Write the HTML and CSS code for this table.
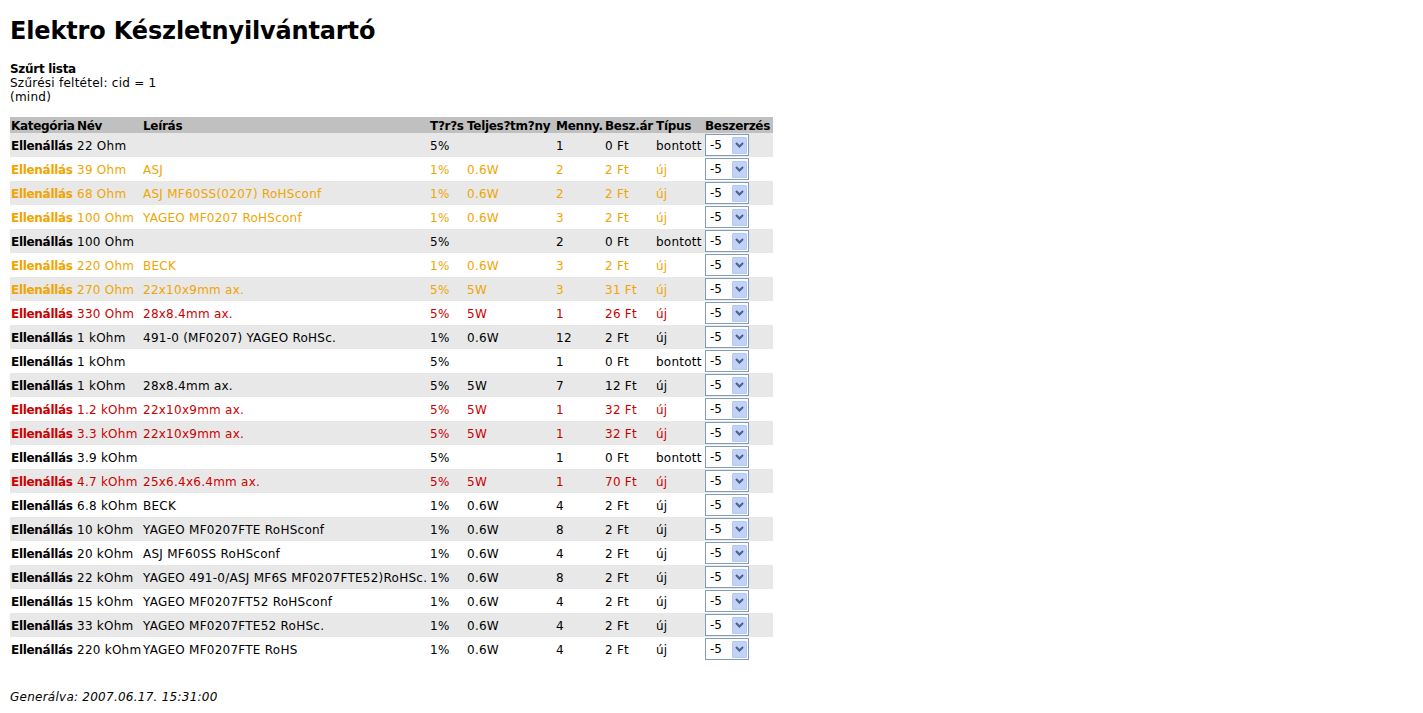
FILE: index.html
```html
<!DOCTYPE html>
<html lang="hu">
<head>
<meta charset="utf-8">
<title>Elektro Készletnyilvántartó</title>
<link rel="stylesheet" href="styles.css">
</head>
<body>
<h1 class="title">Elektro Készletnyilvántartó</h1>
<div class="info">
  <b>Szűrt lista</b><br>
  Szűrési feltétel: cid = 1<br>
  (mind)
</div>
<table class="list">
  <colgroup>
    <col class="c-cat"><col class="c-name"><col class="c-desc"><col class="c-tol"><col class="c-pow"><col class="c-qty"><col class="c-price"><col class="c-type"><col class="c-buy">
  </colgroup>
  <thead>
    <tr><th>Kategória</th><th>Név</th><th>Leírás</th><th>T?r?s</th><th>Teljes?tm?ny</th><th>Menny.</th><th>Besz.ár</th><th>Típus</th><th>Beszerzés</th></tr>
  </thead>
  <tbody id="rows"></tbody>
</table>
<p class="gen">Generálva: 2007.06.17. 15:31:00</p>
<script src="app.js"></script>
</body>
</html>
```
FILE: app.js
```js
var data = [
  ["k","22 Ohm","","5%","","1","0 Ft","bontott"],
  ["o","39 Ohm","ASJ","1%","0.6W","2","2 Ft","új"],
  ["o","68 Ohm","ASJ MF60SS(0207) RoHSconf","1%","0.6W","2","2 Ft","új"],
  ["o","100 Ohm","YAGEO MF0207 RoHSconf","1%","0.6W","3","2 Ft","új"],
  ["k","100 Ohm","","5%","","2","0 Ft","bontott"],
  ["o","220 Ohm","BECK","1%","0.6W","3","2 Ft","új"],
  ["o","270 Ohm","22x10x9mm ax.","5%","5W","3","31 Ft","új"],
  ["r","330 Ohm","28x8.4mm ax.","5%","5W","1","26 Ft","új"],
  ["k","1 kOhm","491-0 (MF0207) YAGEO RoHSc.","1%","0.6W","12","2 Ft","új"],
  ["k","1 kOhm","","5%","","1","0 Ft","bontott"],
  ["k","1 kOhm","28x8.4mm ax.","5%","5W","7","12 Ft","új"],
  ["r","1.2 kOhm","22x10x9mm ax.","5%","5W","1","32 Ft","új"],
  ["r","3.3 kOhm","22x10x9mm ax.","5%","5W","1","32 Ft","új"],
  ["k","3.9 kOhm","","5%","","1","0 Ft","bontott"],
  ["r","4.7 kOhm","25x6.4x6.4mm ax.","5%","5W","1","70 Ft","új"],
  ["k","6.8 kOhm","BECK","1%","0.6W","4","2 Ft","új"],
  ["k","10 kOhm","YAGEO MF0207FTE RoHSconf","1%","0.6W","8","2 Ft","új"],
  ["k","20 kOhm","ASJ MF60SS RoHSconf","1%","0.6W","4","2 Ft","új"],
  ["k","22 kOhm","YAGEO 491-0/ASJ MF6S MF0207FTE52)RoHSc.","1%","0.6W","8","2 Ft","új"],
  ["k","15 kOhm","YAGEO MF0207FT52 RoHSconf","1%","0.6W","4","2 Ft","új"],
  ["k","33 kOhm","YAGEO MF0207FTE52 RoHSc.","1%","0.6W","4","2 Ft","új"],
  ["k","220 kOhm","YAGEO MF0207FTE RoHS","1%","0.6W","4","2 Ft","új"]
];
var tb = document.getElementById("rows");
var chev = '<svg width="9" height="6" viewBox="0 0 9 6"><path d="M1 1 L4.5 4.5 L8 1" fill="none" stroke="#4d6185" stroke-width="2"/></svg>';
data.forEach(function (r, i) {
  var tr = document.createElement("tr");
  tr.className = (i % 2 === 0 ? "alt " : "") + "t-" + r[0];
  var html = '<td><b>Ellenállás</b></td>';
  for (var j = 1; j < 8; j++) html += '<td>' + r[j] + '</td>';
  html += '<td><span class="sel"><span class="sel-val">-5</span><span class="sel-btn">' + chev + '</span></span></td>';
  tr.innerHTML = html;
  tb.appendChild(tr);
});
```
FILE: styles.css
```css
body {
  margin: 10px;
  font-family: "DejaVu Sans", Verdana, sans-serif;
  font-size: 12px;
  line-height: 14px;
  letter-spacing: 0.25px;
  color: #000;
  background: #fff;
}
b {
  letter-spacing: -0.3px;
}
.title {
  font-size: 24px;
  line-height: 28px;
  font-weight: bold;
  letter-spacing: -0.15px;
  margin: 7px 0 17px 0;
}
.info {
  margin: 0 0 13px 0;
}
.list {
  border-collapse: collapse;
  table-layout: fixed;
  width: 763px;
  white-space: nowrap;
}
.c-cat { width: 66px; }
.c-name { width: 66px; }
.c-desc { width: 287px; }
.c-tol { width: 37px; }
.c-pow { width: 89px; }
.c-qty { width: 49px; }
.c-price { width: 51px; }
.c-type { width: 49px; }
.c-buy { width: 69px; }
.list th {
  background: #c0c0c0;
  text-align: left;
  font-weight: bold;
  letter-spacing: -0.3px;
  padding: 2px 1px 0 1px;
  height: 14px;
  overflow: visible;
}
.list td {
  padding: 2px 1px 0 1px;
  height: 22px;
  vertical-align: middle;
  overflow: visible;
}
.list tr.alt td { background: #e8e8e8; }
.t-o td { color: #f0a500; }
.t-r td { color: #cc0000; }
.sel {
  display: flex;
  align-items: center;
  justify-content: space-between;
  box-sizing: border-box;
  width: 44px;
  height: 22px;
  margin: -1px 0 1px 0;
  border: 1px solid #7f9db9;
  background: #fff;
  color: #000;
  padding: 0 1px 0 4px;
  letter-spacing: 0;
}
.sel-val { color: #000; }
.sel-btn {
  display: flex;
  align-items: center;
  justify-content: center;
  box-sizing: border-box;
  width: 15px;
  height: 17px;
  background: #c2d2f8;
  border: 1px solid #b4c6f2;
  border-radius: 1px;
}
.gen {
  margin: 29px 0 0 0;
  font-style: italic;
}
```
